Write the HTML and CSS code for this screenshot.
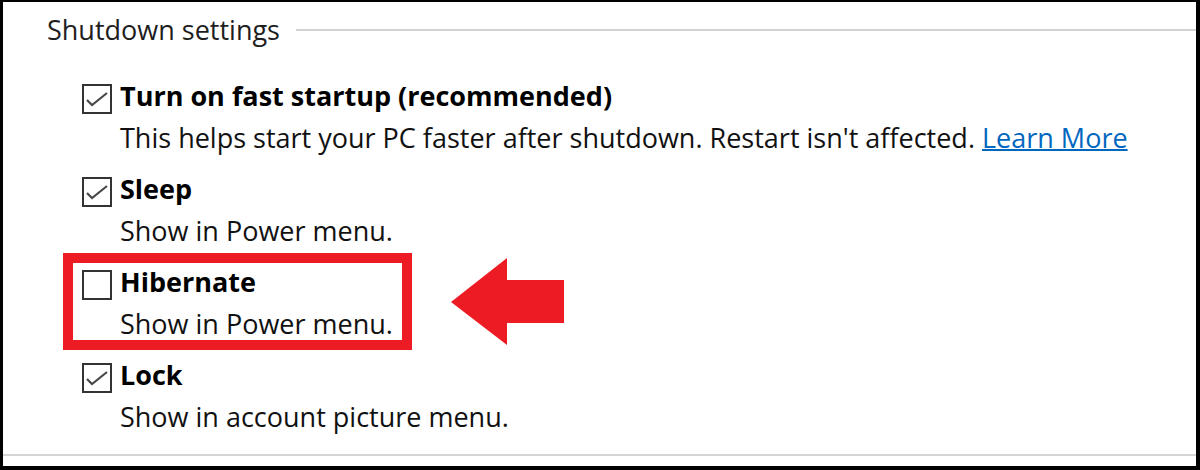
FILE: index.html
```html
<!DOCTYPE html>
<html lang="en">
<head>
  <meta charset="UTF-8">
  <title>Shutdown settings</title>
  <link rel="stylesheet" href="styles.css">
</head>
<body>
  <div class="panel">
    <!-- Group header -->
    <div class="legend">
      <span class="legend-text">Shutdown settings</span>
      <span class="rule"></span>
    </div>

    <ul class="options">
      <li class="option">
        <span class="box checked">
          <svg viewBox="0 0 26 26"><polyline points="3,14 8,19 23,7"/></svg>
        </span>
        <div class="text">
          <div class="title">Turn on fast startup (recommended)</div>
          <div class="desc">This helps start your PC faster after shutdown. Restart isn't affected. <a href="#">Learn More</a></div>
        </div>
      </li>
      <li class="option">
        <span class="box checked">
          <svg viewBox="0 0 26 26"><polyline points="3,14 8,19 23,7"/></svg>
        </span>
        <div class="text">
          <div class="title">Sleep</div>
          <div class="desc">Show in Power menu.</div>
        </div>
      </li>
      <li class="option highlight">
        <span class="box"></span>
        <div class="text">
          <div class="title">Hibernate</div>
          <div class="desc">Show in Power menu.</div>
        </div>
      </li>
      <li class="option">
        <span class="box checked">
          <svg viewBox="0 0 26 26"><polyline points="3,14 8,19 23,7"/></svg>
        </span>
        <div class="text">
          <div class="title">Lock</div>
          <div class="desc">Show in account picture menu.</div>
        </div>
      </li>
    </ul>

    <div class="bottom-rule"></div>

    <!-- Callout arrow pointing at Hibernate -->
    <svg class="arrow" viewBox="0 0 113 87">
      <polygon points="0,44 56,0 56,22 113,22 113,65 56,65 56,87"/>
    </svg>
  </div>
</body>
</html>
```

FILE: styles.css
```css
/* Base styling */
body {
  margin: 0;
  padding: 0;
  background-color: #000;
  font-family: "Open Sans", "Noto Sans", sans-serif;
  color: #111;
}

.panel {
  position: relative;
  margin: 2px 4px 4px 3px;
  height: 464px;
  background-color: #fff;
  display: flex;
  flex-direction: column;
}

/* Group header */
.legend {
  display: flex;
  align-items: center;
  padding: 7px 0 0 44px;
  height: 42px;
  font-size: 27px;
  line-height: 42px;
}

.legend-text {
  color: #1e1e1e;
}

.rule {
  flex: 1;
  height: 2px;
  margin-left: 16px;
  background-color: #d2d2d2;
}

/* Option list */
.options {
  list-style: none;
  margin: 24px 0 0 0;
  padding: 0 0 0 79px;
}

.option {
  position: relative;
  display: flex;
  gap: 8px;
  margin-bottom: 9px;
}

.box {
  flex: none;
  width: 26px;
  height: 26px;
  margin-top: 9px;
  border: 2px solid #333;
  background-color: #fff;
}

.box svg {
  display: block;
  width: 26px;
  height: 26px;
}

.box polyline {
  fill: none;
  stroke: #484848;
  stroke-width: 2.2;
}

.title {
  font-size: 27px;
  font-weight: bold;
  line-height: 42px;
  color: #000;
}

.desc {
  font-size: 27px;
  line-height: 42px;
  color: #111;
}

.desc a {
  color: #0067c0;
  text-decoration: underline;
  text-decoration-thickness: 2px;
}

/* Red highlight around Hibernate */
.highlight::before {
  content: "";
  position: absolute;
  left: -19px;
  top: -8px;
  width: 329px;
  height: 77px;
  border: 10px solid #ed1c24;
}

.bottom-rule {
  margin-top: auto;
  margin-bottom: 10px;
  height: 2px;
  background-color: #d4d4d4;
}

.arrow {
  position: absolute;
  left: 448px;
  top: 256px;
  width: 113px;
  height: 87px;
}

.arrow polygon {
  fill: #ed1c24;
}
```
